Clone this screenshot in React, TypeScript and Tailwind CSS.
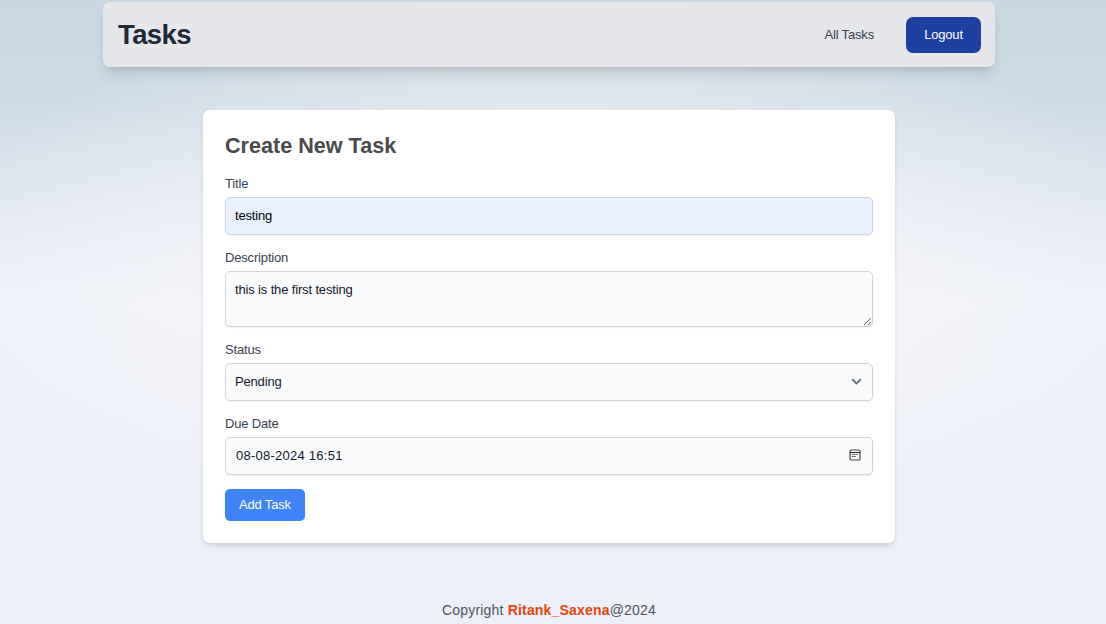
import type { ReactNode } from 'react';

const fieldClass =
  'block w-full rounded-[5px] border border-[#d1d5db] bg-[#f9fafb] px-[9px] text-[13px] text-[#111827] shadow-[0_1px_2px_rgba(0,0,0,0.06)] outline-none';

function Field({ label, id, children }: { label: string; id: string; children: ReactNode }) {
  return (
    <div>
      <label htmlFor={id} className="mb-[4px] block h-[18px] text-[13px] leading-[18px] tracking-[-0.17px] text-[#374151]">
        {label}
      </label>
      {children}
    </div>
  );
}

function ChevronIcon() {
  return (
    <svg className="pointer-events-none absolute top-[10px] right-[8px] size-[17.5px]" viewBox="0 0 20 20" fill="none" stroke="#6b7280" strokeWidth="2.1" strokeLinecap="round" strokeLinejoin="round">
      <path d="M5.5 7.7l4.3 4.3 4.3-4.3" />
    </svg>
  );
}

function CalendarIcon() {
  return (
    <svg className="absolute top-[12px] right-[12px] h-[12px] w-[12px]" viewBox="0 0 12 12" fill="none">
      <rect x="1" y="1" width="10" height="10" rx="1.1" stroke="#444444" strokeWidth="1.2" />
      <path d="M1 3.5h10" stroke="#222222" strokeWidth="1" />
      <path d="M3 5.5h1.5M5 5.5h1.5M7.3 5.5h1.5M3 7.5h1.5M5 7.5h1.5" stroke="#444444" strokeWidth="1.1" />
    </svg>
  );
}

export default function App() {
  return (
    <div className="flex h-[624px] w-full flex-col items-center overflow-hidden bg-[radial-gradient(ellipse_600px_270px_at_50%_260px,rgba(250,249,250,0.6),rgba(250,249,250,0.45)_50%,rgba(250,249,250,0)),linear-gradient(180deg,#c9d7e1_0px,#ccdae4_65px,#cfdce7_105px,#d8e2ec_150px,#e0e7f1_200px,#e8ecf5_250px,#eef1f9_300px,#eef0f8_400px,#eceff8_500px,#edf0f8_624px)] pt-[2px] pr-[8px] font-['Liberation_Sans',Arial,sans-serif]">
      <header className="flex h-[65px] w-[892px] shrink-0 items-center justify-between rounded-[7px] bg-[#e5e7eb] pr-[14px] pl-[15px] shadow-[0_9px_13px_-3px_rgba(0,0,0,0.12),0_4px_6px_-4px_rgba(0,0,0,0.12)]">
        <h1 className="text-[27.5px] leading-[32px] font-bold tracking-[-0.6px] text-[#1f2937]">Tasks</h1>
        <nav className="flex items-center gap-[32px]">
          <a href="#" className="text-[13px] tracking-[-0.17px] text-[#374151]">All Tasks</a>
          <button className="h-[36px] w-[75px] rounded-[7px] bg-[#1e40a0] text-[13px] tracking-[-0.17px] text-white">Logout</button>
        </nav>
      </header>

      <main className="mt-[43px] h-[433px] w-[692px] shrink-0 rounded-[7px] bg-white px-[22px] pt-[22px] shadow-[0_4px_6px_-1px_rgba(0,0,0,0.1),0_2px_4px_-2px_rgba(0,0,0,0.1)]">
        <h2 className="mb-[15px] h-[28px] text-[21.6px] leading-[28px] font-bold text-[#4a4a4a]">Create New Task</h2>
        <form className="flex flex-col items-stretch gap-[14px]">
          <Field label="Title" id="title">
            <input id="title" defaultValue="testing" className="block h-[38px] w-full rounded-[5px] border border-[#ccd3e0] bg-[#e8f0fe] px-[9px] pb-[2px] text-[13px] tracking-[-0.17px] text-black shadow-[0_1px_2px_rgba(0,0,0,0.06)] outline-none" />
          </Field>
          <Field label="Description" id="description">
            <textarea id="description" defaultValue="this is the first testing" className={fieldClass + ' h-[56px] resize-y py-[9px] leading-[18px] tracking-[-0.15px]'} />
          </Field>
          <Field label="Status" id="status">
            <div className="relative">
              <select id="status" defaultValue="Pending" className={fieldClass + ' h-[38px] appearance-none tracking-[-0.17px]'}>
                <option>Pending</option>
              </select>
              <ChevronIcon />
            </div>
          </Field>
          <Field label="Due Date" id="due">
            <div className="relative">
              <input id="due" defaultValue="08-08-2024 16:51" className={fieldClass + ' h-[38px] pb-[2px] pl-[10px] tracking-[0.25px]'} />
              <CalendarIcon />
            </div>
          </Field>
          <button type="button" className="h-[32px] w-[80px] rounded-[5px] bg-[#3f83f8] text-[13px] tracking-[-0.17px] text-white">Add Task</button>
        </form>
      </main>

      <footer className="mt-[57px] text-[14px] leading-[20px] tracking-[0.18px] text-[#4b5563]">
        Copyright <span className="font-bold text-[#e8440c]">Ritank_Saxena</span>@2024
      </footer>
    </div>
  );
}
